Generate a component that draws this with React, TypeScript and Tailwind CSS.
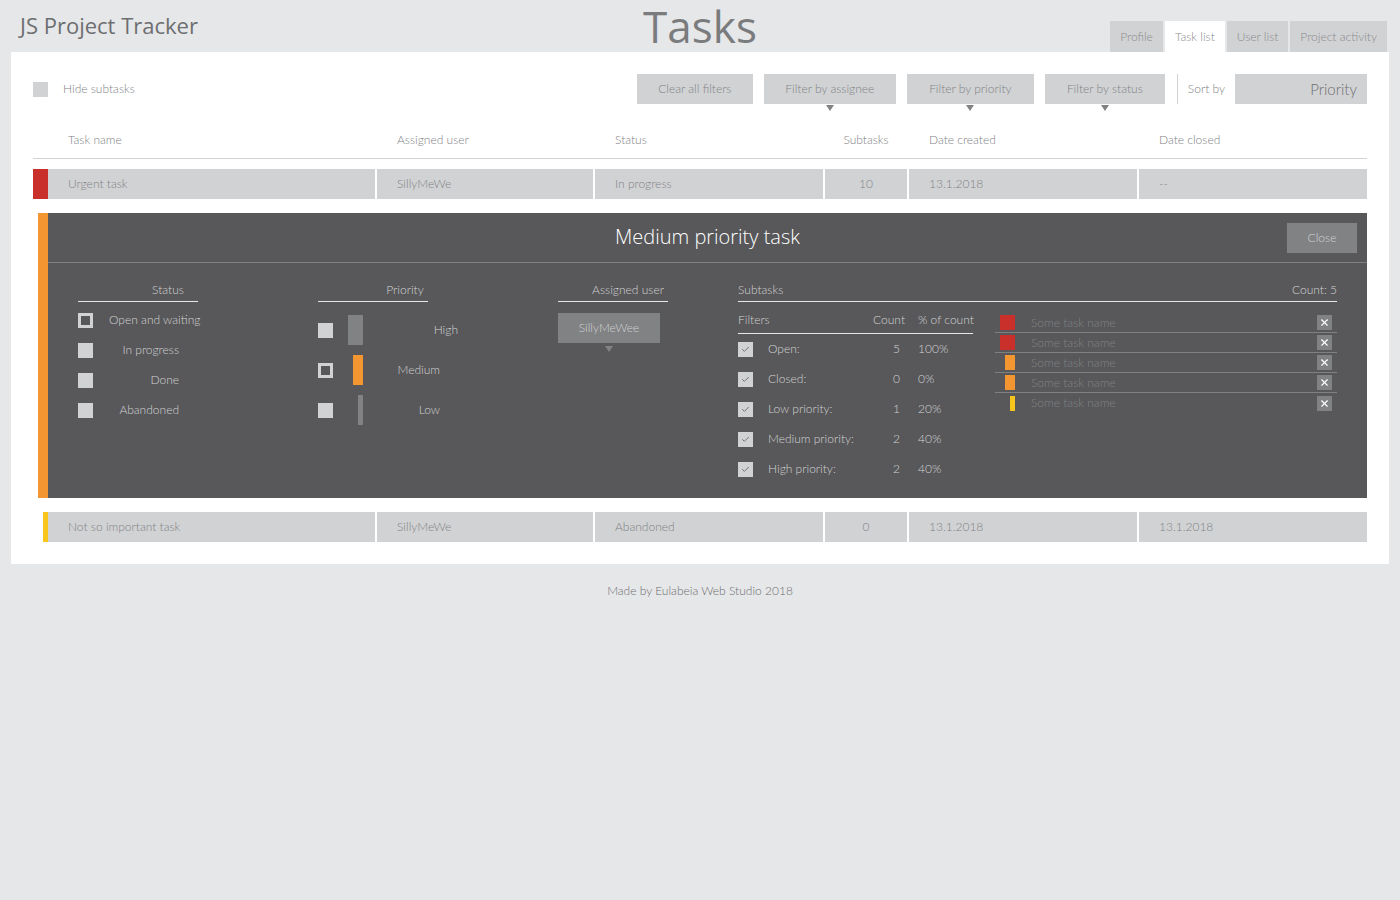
import { Check, X } from "lucide-react";

const lato = { fontFamily: "Lato, 'Liberation Sans', sans-serif" };

function Triangle({ className }: { className: string }) {
  return (
    <span
      className={`absolute left-1/2 -translate-x-1/2 h-0 w-0 border-x-[4px] border-t-[6px] border-x-transparent border-t-[#818284] ${className}`}
    />
  );
}

function FilterButton({ label, width, arrow }: { label: string; width: string; arrow?: boolean }) {
  return (
    <div className={`relative flex h-[30px] items-center justify-center bg-[#d1d2d4] text-[12px] text-[#808285] ${width}`}>
      {label}
      {arrow && <Triangle className="top-[31px]" />}
    </div>
  );
}

type RowProps = {
  bar: string;
  barWidth: string;
  name: string;
  user: string;
  status: string;
  subtasks: string;
  created: string;
  closed: string;
};

function TaskRow(r: RowProps) {
  const cell = "flex h-[30px] items-center bg-[#d1d2d4] text-[12px] text-[#808285]";
  return (
    <div className="flex h-[30px]">
      <div className="flex w-[15px] justify-end">
        <div className={`h-full ${r.barWidth} ${r.bar}`} />
      </div>
      <div className={`${cell} w-[327px] pl-[20px]`}>{r.name}</div>
      <div className={`${cell} ml-[2px] w-[216px] pl-[20px]`}>{r.user}</div>
      <div className={`${cell} ml-[2px] w-[228px] pl-[20px]`}>{r.status}</div>
      <div className={`${cell} ml-[2px] w-[82px] justify-center`}>{r.subtasks}</div>
      <div className={`${cell} ml-[2px] w-[228px] pl-[20px]`}>{r.created}</div>
      <div className={`${cell} ml-[2px] w-[228px] pl-[20px]`}>{r.closed}</div>
    </div>
  );
}

function Box({ selected }: { selected?: boolean }) {
  return selected ? (
    <div className="h-[15px] w-[15px] shrink-0 border-[3px] border-[#d1d2d4] bg-[#58585a]" />
  ) : (
    <div className="h-[15px] w-[15px] shrink-0 bg-[#d1d2d4]" />
  );
}

function ColumnHead({ label, pad }: { label: string; pad: string }) {
  return (
    <div className={`flex h-[21px] items-start justify-center border-b border-[#e6e7e9] text-[12px] text-[#d1d2d4] ${pad}`}>
      <span className="whitespace-nowrap">{label}</span>
    </div>
  );
}

const statuses = [
  { label: "Open and waiting", selected: true },
  { label: "In progress" },
  { label: "Done" },
  { label: "Abandoned" },
];

const priorities = [
  { label: "High", bar: "w-[15px] bg-[#818284]", lw: "w-[80px]" },
  { label: "Medium", bar: "w-[10px] bg-[#f39631]", lw: "w-[62px]", selected: true },
  { label: "Low", bar: "w-[5px] bg-[#818284]", lw: "w-[62px]" },
];

const filters = [
  ["Open:", "5", "100%"],
  ["Closed:", "0", "0%"],
  ["Low priority:", "1", "20%"],
  ["Medium priority:", "2", "40%"],
  ["High priority:", "2", "40%"],
];

const subtasks = [
  "w-[15px] bg-[#c9302c]",
  "w-[15px] bg-[#c9302c]",
  "w-[10px] bg-[#f39631]",
  "w-[10px] bg-[#f39631]",
  "w-[5px] bg-[#f8c51c]",
];

function DetailPanel() {
  return (
    <div className="mt-[14px] ml-[5px] flex bg-[#58585a]">
      <div className="w-[10px] shrink-0 bg-[#f39631]" />
      <div className="flex-1">
        <div className="relative flex h-[50px] items-center justify-center border-b border-[#7f8082]">
          <span className="pb-[2px] text-[20px] text-white" style={{ fontFamily: "'Open Sans', sans-serif" }}>
            Medium priority task
          </span>
          <div className="absolute right-[10px] top-[10px] flex h-[30px] w-[70px] items-center justify-center bg-[#818284] text-[12px] text-[#d1d2d4]">
            Close
          </div>
        </div>

        <div className="flex pl-[30px] pt-[18px] pb-[14px]">
          {/* Status */}
          <div className="w-[120px]">
            <ColumnHead label="Status" pad="pl-[60px]" />
            <div className="mt-[3px]">
              {statuses.map((s) => (
                <div key={s.label} className="flex h-[30px] items-center">
                  <Box selected={s.selected} />
                  <div className="ml-[16px] w-[70px] whitespace-nowrap text-right text-[12px] text-[#d1d2d4]">{s.label}</div>
                </div>
              ))}
            </div>
          </div>

          {/* Priority */}
          <div className="ml-[120px] w-[110px]">
            <ColumnHead label="Priority" pad="pl-[64px]" />
            <div className="mt-[8px]">
              {priorities.map((p) => (
                <div key={p.label} className="flex h-[40px] items-center">
                  <Box selected={p.selected} />
                  <div className="ml-[15px] flex h-[30px] w-[15px] shrink-0 justify-end">
                    <div className={`h-full ${p.bar}`} />
                  </div>
                  <div className={`ml-[15px] shrink-0 whitespace-nowrap text-right text-[12px] text-[#d1d2d4] ${p.lw}`}>{p.label}</div>
                </div>
              ))}
            </div>
          </div>

          {/* Assigned user */}
          <div className="ml-[130px] w-[110px]">
            <ColumnHead label="Assigned user" pad="pl-[30px]" />
            <div className="relative mt-[11px] flex h-[30px] w-[102px] items-center justify-center bg-[#818284] text-[12px] text-[#d1d2d4]">
              SillyMeWee
              <Triangle className="top-[33px]" />
            </div>
          </div>

          {/* Subtasks */}
          <div className="ml-[70px] w-[599px]">
            <div className="flex h-[21px] items-start justify-between border-b border-[#e6e7e9] text-[12px] text-[#d1d2d4]">
              <span>Subtasks</span>
              <span>Count: 5</span>
            </div>
            <div className="flex">
              <div className="w-[235px]">
                <div className="mt-[5px] flex h-[27px] items-center border-b border-[#e6e7e9] text-[12px] text-[#d1d2d4]">
                  <span className="flex-1">Filters</span>
                  <span className="w-[48px] text-right">Count</span>
                  <span className="ml-[13px] w-[55px] whitespace-nowrap">% of count</span>
                </div>
                {filters.map(([l, c, p]) => (
                  <div key={l} className="flex h-[30px] items-center text-[12px] text-[#d1d2d4]">
                    <div className="flex h-[15px] w-[15px] items-center justify-center bg-[#d1d2d4]">
                      <Check size={9} strokeWidth={2.5} className="text-[#6d6e70]" />
                    </div>
                    <span className="ml-[15px] flex-1">{l}</span>
                    <span className="w-[40px] text-right">{c}</span>
                    <span className="ml-[18px] w-[55px]">{p}</span>
                  </div>
                ))}
              </div>
              <div className="ml-[22px] mt-[11px] flex-1">
                {subtasks.map((b, i) => (
                  <div
                    key={i}
                    className={`flex h-[20px] items-center ${i < subtasks.length - 1 ? "border-b border-[#7f8082]" : ""}`}
                  >
                    <div className="ml-[5px] flex h-[15px] w-[15px] justify-end">
                      <div className={`h-full ${b}`} />
                    </div>
                    <span className="ml-[16px] flex-1 text-[12px] text-[#808285]">Some task name</span>
                    <div className="mr-[5px] flex h-[15px] w-[15px] items-center justify-center bg-[#818284]">
                      <X size={11} strokeWidth={2.5} className="text-white" />
                    </div>
                  </div>
                ))}
              </div>
            </div>
          </div>
        </div>
      </div>
    </div>
  );
}

export default function App() {
  const tabs = ["Profile", "Task list", "User list", "Project activity"];
  return (
    <div className="min-h-[900px] bg-[#e6e7e9] font-light" style={lato}>
      <header className="grid h-[52px] grid-cols-3 grid-rows-[52px] px-[11px]">
        <div
          className="flex items-center pl-[9px] pb-[2px] text-[22px] font-normal leading-none text-[#6d6e70]"
          style={{ fontFamily: "'Open Sans', sans-serif" }}
        >
          JS Project Tracker
        </div>
        <div
          className="flex items-center justify-center text-[44px] font-normal leading-[52px] text-[#7a7b7d]"
          style={{ fontFamily: "'Open Sans', sans-serif" }}
        >
          Tasks
        </div>
        <div className="flex items-end justify-end gap-[2px] pr-[2px]">
          {tabs.map((t) => (
            <div
              key={t}
              className={`flex h-[31px] items-center px-[10px] text-[12px] leading-none text-[#8a8b8d] ${t === "Task list" ? "bg-white" : "bg-[#d1d2d4]"}`}
            >
              {t}
            </div>
          ))}
        </div>
      </header>

      <main className="mx-[11px] bg-white px-[22px] pt-[22px] pb-[22px]">
        <div className="flex h-[30px] items-center">
          <div className="h-[15px] w-[15px] bg-[#d1d2d4]" />
          <span className="ml-[15px] text-[12px] text-[#808285]">Hide subtasks</span>
          <div className="ml-auto flex items-center gap-[11px]">
            <FilterButton label="Clear all filters" width="w-[116px]" />
            <FilterButton label="Filter by assignee" width="w-[132px]" arrow />
            <FilterButton label="Filter by priority" width="w-[127px]" arrow />
            <FilterButton label="Filter by status" width="w-[120px]" arrow />
          </div>
          <div className="ml-[12px] h-[30px] w-px bg-[#d1d2d4]" />
          <span className="ml-[10px] text-[12px] text-[#808285]">Sort by</span>
          <div className="ml-[10px] flex h-[30px] w-[132px] items-center justify-end bg-[#d1d2d4] pr-[10px] text-[15px] text-[#6d6e70]">
            Priority
          </div>
        </div>

        <div className="mt-[18px] flex h-[37px] items-center border-b border-[#d1d2d4] text-[12px] text-[#808285]">
          <span className="ml-[35px] w-[329px]">Task name</span>
          <span className="w-[218px]">Assigned user</span>
          <span className="w-[210px]">Status</span>
          <span className="w-[82px] text-center">Subtasks</span>
          <span className="ml-[22px] w-[230px]">Date created</span>
          <span>Date closed</span>
        </div>

        <div className="mt-[10px]">
          <TaskRow
            bar="bg-[#c9302c]"
            barWidth="w-[15px]"
            name="Urgent task"
            user="SillyMeWe"
            status="In progress"
            subtasks="10"
            created="13.1.2018"
            closed="--"
          />
        </div>

        <DetailPanel />

        <div className="mt-[14px]">
          <TaskRow
            bar="bg-[#f8c51c]"
            barWidth="w-[5px]"
            name="Not so important task"
            user="SillyMeWe"
            status="Abandoned"
            subtasks="0"
            created="13.1.2018"
            closed="13.1.2018"
          />
        </div>
      </main>

      <footer className="mt-[18px] text-center text-[12px] text-[#6d6e70]">Made by Eulabeia Web Studio 2018</footer>
    </div>
  );
}
